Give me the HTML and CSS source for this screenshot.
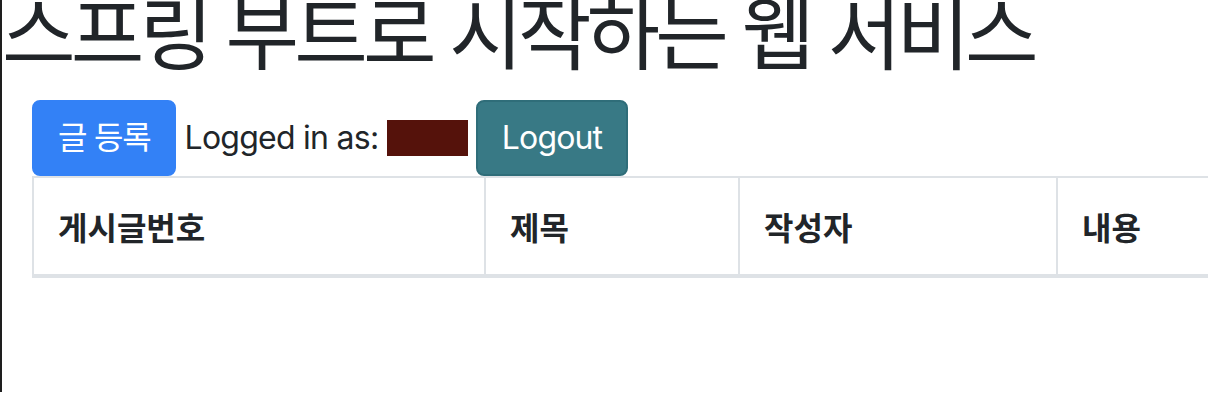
FILE: index.html
```html
<!DOCTYPE html>
<html lang="ko">
<head>
<meta charset="utf-8">
<title>스프링 부트로 시작하는 웹 서비스</title>
<link rel="stylesheet" href="styles.css">
</head>
<body>
<div class="page">
  <h1 class="title">스프링 부트로 시작하는 웹 서비스</h1>
  <div class="container">
    <div class="actions">
      <a class="btn btn-primary" href="#">글 등록</a>
      Logged in as: <span class="user"></span>
      <a class="btn btn-info" href="#">Logout</a>
    </div>
    <table class="board">
      <colgroup>
        <col class="c1"><col class="c2"><col class="c3"><col class="c4">
      </colgroup>
      <thead>
        <tr>
          <th>게시글번호</th>
          <th>제목</th>
          <th>작성자</th>
          <th>내용</th>
        </tr>
      </thead>
      <tbody></tbody>
    </table>
  </div>
</div>
</body>
</html>
```
FILE: styles.css
```css
html, body {
  margin: 0;
  padding: 0;
  overflow: hidden;
  background: #fff;
}

body {
  font-family: Inter, "Noto Sans CJK KR", sans-serif;
  font-size: 32px;
  line-height: 48px;
  letter-spacing: -0.75px;
  color: #212529;
}

.page {
  min-height: 412px;
  border-left: 2px solid #1e1e1e;
}

.title {
  margin: -20px 0 24px 0;
  font-family: "Noto Sans CJK KR", sans-serif;
  font-size: 80px;
  line-height: 96px;
  font-weight: 400;
  letter-spacing: -4.9px;
  white-space: nowrap;
}

.container {
  padding-left: 30px;
}

.actions {
  white-space: nowrap;
}

.btn {
  display: inline-block;
  padding: 12px 24px;
  border: 2px solid transparent;
  border-radius: 8px;
  color: #fff;
  text-decoration: none;
  font-size: 32px;
  line-height: 48px;
}

.btn-primary {
  background: #3381f6;
  border-color: #3381f6;
  letter-spacing: -1.25px;
}

.btn-info {
  background: #387985;
  border-color: #2f6d79;
  letter-spacing: -0.85px;
}

.user {
  display: inline-block;
  width: 81px;
  height: 36px;
  background: #55120b;
  vertical-align: -7px;
}

.board {
  border-collapse: collapse;
  table-layout: fixed;
  width: 1450px;
  letter-spacing: 0;
}

.c1 { width: 452px; }
.c2 { width: 254px; }
.c3 { width: 318px; }
.c4 { width: 426px; }

.board th {
  text-align: left;
  font-family: "Noto Sans CJK KR", sans-serif;
  font-weight: 700;
  font-size: 32px;
  line-height: 48px;
  padding: 24px;
  border: 2px solid #dee2e6;
  border-bottom: 4px solid #dee2e6;
}
```
